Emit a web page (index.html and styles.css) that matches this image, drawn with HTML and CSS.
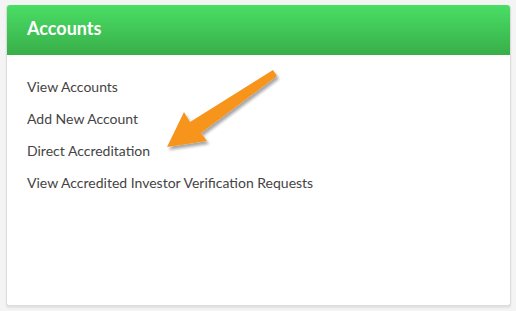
FILE: index.html
```html
<!DOCTYPE html>
<html lang="en">

<head>
  <meta charset="UTF-8" />
  <meta name="viewport" content="width=device-width, initial-scale=1.0" />
  <title>Accounts</title>
  <link rel="stylesheet" href="styles.css">
</head>

<body>
  <div class="panel">
    <div class="panel-heading">Accounts</div>
    <ul class="panel-links">
      <li><a href="#">View Accounts</a></li>
      <li><a href="#">Add New Account</a></li>
      <li><a href="#">Direct Accreditation</a></li>
      <li><a href="#">View Accredited Investor Verification Requests</a></li>
    </ul>

    <svg class="callout-arrow" width="140" height="100" viewBox="150 60 140 100">
      <defs>
        <filter id="arrowShadow" x="-20%" y="-20%" width="140%" height="140%">
          <feGaussianBlur in="SourceAlpha" stdDeviation="1.5" />
          <feOffset dx="2" dy="3" result="blur" />
          <feComponentTransfer>
            <feFuncA type="linear" slope="0.35" />
          </feComponentTransfer>
          <feMerge>
            <feMergeNode />
            <feMergeNode in="SourceGraphic" />
          </feMerge>
        </filter>
      </defs>
      <polygon points="272,70 276,76 200,133 206,141 166,147 183,112 189,122" fill="#f7941d" filter="url(#arrowShadow)" />
    </svg>
  </div>
</body>

</html>
```

FILE: styles.css
```css
body {
  margin: 0;
  padding: 5px 5px 5px 6px;
  background-color: #f4f4f4;
  font-family: Lato, "Open Sans", sans-serif;
}

.panel {
  position: relative;
  height: 300px;
  background-color: #fff;
  border: 1px solid #dcdcdc;
  border-top: none;
  border-radius: 3px;
  box-shadow: 0 2px 2px rgba(0, 0, 0, 0.08);
}

.panel-heading {
  height: 50px;
  padding-left: 20px;
  line-height: 47px;
  color: #fff;
  font-size: 18px;
  font-weight: bold;
  background: linear-gradient(#4ade65, #38ae49);
  border-radius: 3px 3px 0 0;
}

.panel-links {
  list-style: none;
  margin: 0;
  padding: 21px 0 0 20px;
}

.panel-links li {
  height: 32px;
  line-height: 19px;
}

.panel-links a {
  color: #444;
  font-size: 14px;
  text-decoration: none;
}

.callout-arrow {
  position: absolute;
  left: 144px;
  top: 55px;
}
```
